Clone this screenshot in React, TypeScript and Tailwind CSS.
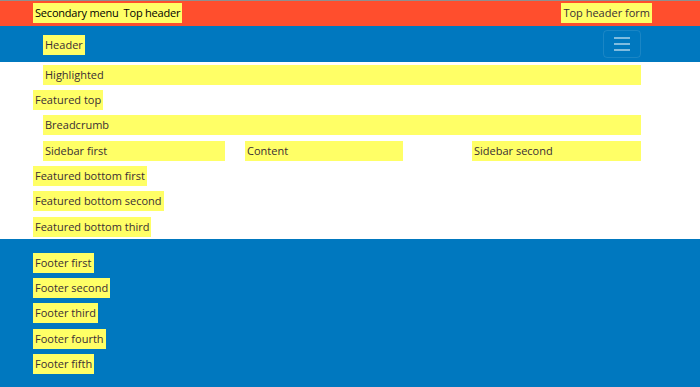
import React from "react";

function Tag({ children, className = "" }: { children: React.ReactNode; className?: string }) {
  return (
    <div className={`bg-[#ffff66] h-5 leading-5 px-[2px] text-[#3a2e34] whitespace-nowrap ${className}`}>{children}</div>
  );
}

export default function App() {
  return (
    <div className="w-[700px] h-[387px] overflow-hidden bg-white text-[11px] font-['Open_Sans',sans-serif]">
      {/* Top bar */}
      <div className="h-[26px] bg-[#ff4e2d] border-t border-[#8f8f8f]">
        <div className="ml-[33px] w-[619px] pt-[2px] flex justify-between">
          <Tag className="w-fit text-black tracking-[-0.2px]">
            Secondary menu<span className="ml-[5px]">Top header</span>
          </Tag>
          <Tag className="w-fit">Top header form</Tag>
        </div>
      </div>

      {/* Header */}
      <div className="h-[36px] bg-[#0078bf]">
        <div className="ml-[43px] w-[598px] flex items-center justify-between h-full">
          <Tag className="w-fit mt-[2px]">Header</Tag>
          <button className="w-[38px] h-[28px] rounded border border-white/10 flex flex-col items-center justify-center gap-[4px]">
            <span className="block w-[16px] h-[2px] bg-white/50" />
            <span className="block w-[16px] h-[2px] bg-white/50" />
            <span className="block w-[16px] h-[2px] bg-white/50" />
          </button>
        </div>
      </div>

      {/* Main */}
      <div className="h-[177px] ml-[33px] w-[619px] pt-[3px]">
        <Tag className="ml-[10px] w-[598px]">Highlighted</Tag>
        <Tag className="mt-[5px] w-fit">Featured top</Tag>
        <Tag className="mt-[5px] ml-[10px] w-[598px]">Breadcrumb</Tag>
        <div className="mt-[6px] ml-[10px] flex">
          <Tag className="w-[182px]">Sidebar first</Tag>
          <Tag className="ml-[20px] w-[158px]">Content</Tag>
          <Tag className="ml-[69px] w-[169px]">Sidebar second</Tag>
        </div>
        <Tag className="mt-[5px] w-fit">Featured bottom first</Tag>
        <Tag className="mt-[5px] w-fit">Featured bottom second</Tag>
        <Tag className="mt-[6px] w-fit">Featured bottom third</Tag>
      </div>

      {/* Footer */}
      <div className="h-[148px] bg-[#0078bf] pt-[14px]">
        <div className="ml-[33px] flex flex-col items-start gap-[5px]">
          <Tag>Footer first</Tag>
          <Tag>Footer second</Tag>
          <Tag className="mb-[1px]">Footer third</Tag>
          <Tag>Footer fourth</Tag>
          <Tag>Footer fifth</Tag>
        </div>
      </div>
    </div>
  );
}
